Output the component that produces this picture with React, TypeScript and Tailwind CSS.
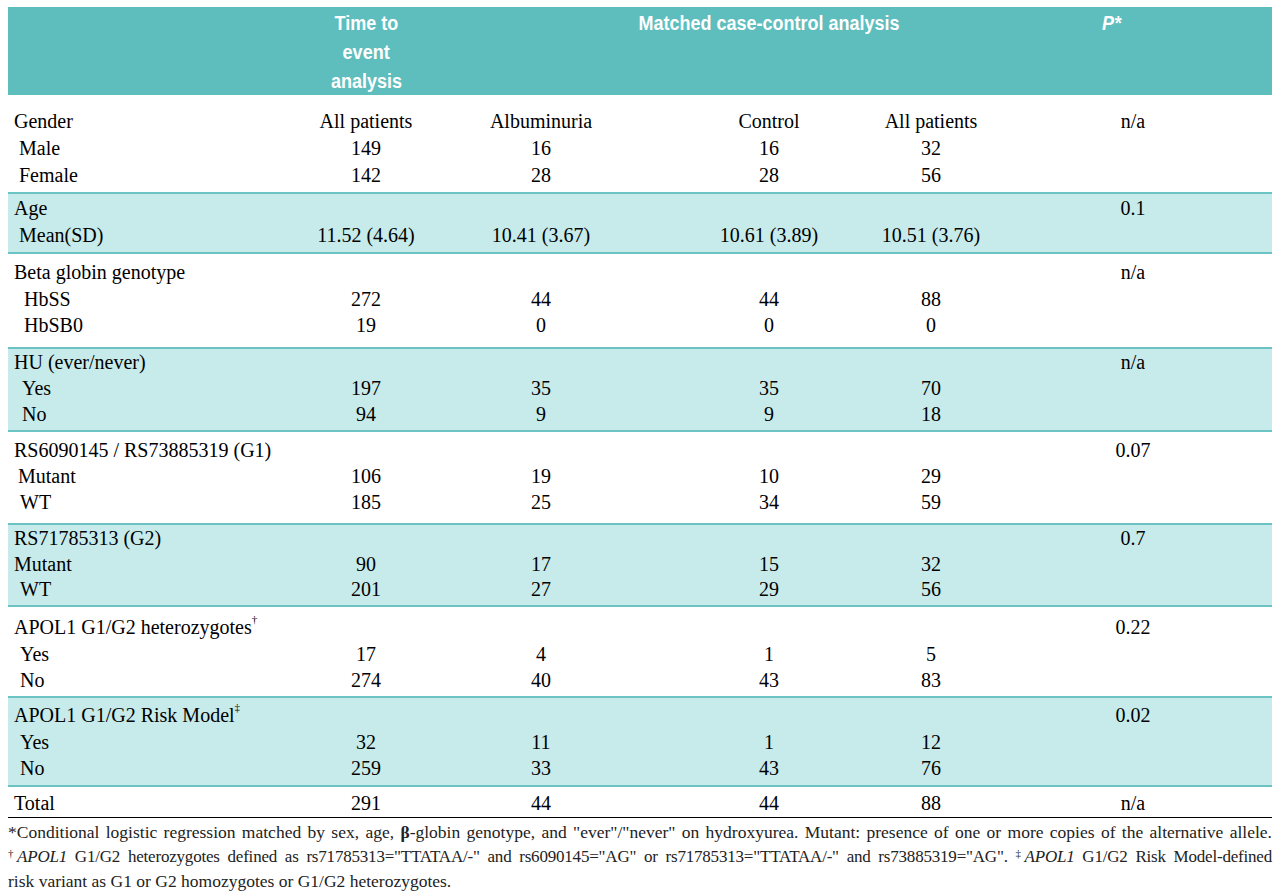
import React from 'react';

type Row = { label: string; indent: string; vals: string[]; p?: string };
type Group = { shaded: boolean; pad: string; lead: string; rows: Row[]; last?: boolean };

const GROUPS: Group[] = [
  {
    shaded: false,
    pad: 'pt-[13px] pb-[3px]',
    lead: 'leading-[27px]',
    rows: [
      { label: 'Gender', indent: 'pl-[6px]', vals: ['All patients', 'Albuminuria', 'Control', 'All patients'], p: 'n/a' },
      { label: 'Male', indent: 'pl-[11px]', vals: ['149', '16', '16', '32'] },
      { label: 'Female', indent: 'pl-[11px]', vals: ['142', '28', '28', '56'] },
    ],
  },
  {
    shaded: true,
    pad: 'pt-[1px] pb-[3px]',
    lead: 'leading-[27px]',
    rows: [
      { label: 'Age', indent: 'pl-[6px]', vals: ['', '', '', ''], p: '0.1' },
      { label: 'Mean(SD)', indent: 'pl-[11px]', vals: ['11.52 (4.64)', '10.41 (3.67)', '10.61 (3.89)', '10.51 (3.76)'] },
    ],
  },
  {
    shaded: false,
    pad: 'pt-[5px] pb-[8.5px]',
    lead: 'leading-[26.5px]',
    rows: [
      { label: 'Beta globin genotype', indent: 'pl-[6px]', vals: ['', '', '', ''], p: 'n/a' },
      { label: 'HbSS', indent: 'pl-[16px]', vals: ['272', '44', '44', '88'] },
      { label: 'HbSB0', indent: 'pl-[16px]', vals: ['19', '0', '0', '0'] },
    ],
  },
  {
    shaded: true,
    pad: 'pt-0 pb-[3px]',
    lead: 'leading-[26px]',
    rows: [
      { label: 'HU (ever/never)', indent: 'pl-[6px]', vals: ['', '', '', ''], p: 'n/a' },
      { label: 'Yes', indent: 'pl-[14px]', vals: ['197', '35', '35', '70'] },
      { label: 'No', indent: 'pl-[14px]', vals: ['94', '9', '9', '18'] },
    ],
  },
  {
    shaded: false,
    pad: 'pt-[5px] pb-[8px]',
    lead: 'leading-[26px]',
    rows: [
      { label: 'RS6090145 / RS73885319 (G1)', indent: 'pl-[6px]', vals: ['', '', '', ''], p: '0.07' },
      { label: 'Mutant', indent: 'pl-[10px]', vals: ['106', '19', '10', '29'] },
      { label: 'WT', indent: 'pl-[12px]', vals: ['185', '25', '34', '59'] },
    ],
  },
  {
    shaded: true,
    pad: 'pt-[1px] pb-[2.5px]',
    lead: 'leading-[25.5px]',
    rows: [
      { label: 'RS71785313 (G2)', indent: 'pl-[6px]', vals: ['', '', '', ''], p: '0.7' },
      { label: 'Mutant', indent: 'pl-[6px]', vals: ['90', '17', '15', '32'] },
      { label: 'WT', indent: 'pl-[12px]', vals: ['201', '27', '29', '56'] },
    ],
  },
  {
    shaded: false,
    pad: 'pt-[7px] pb-[2.5px]',
    lead: 'leading-[26.5px]',
    rows: [
      { label: 'APOL1 G1/G2 heterozygotes†', indent: 'pl-[6px]', vals: ['', '', '', ''], p: '0.22' },
      { label: 'Yes', indent: 'pl-[12px]', vals: ['17', '4', '1', '5'] },
      { label: 'No', indent: 'pl-[12px]', vals: ['274', '40', '43', '83'] },
    ],
  },
  {
    shaded: true,
    pad: 'pt-[4px] pb-[3.5px]',
    lead: 'leading-[26.5px]',
    rows: [
      { label: 'APOL1 G1/G2 Risk Model‡', indent: 'pl-[6px]', vals: ['', '', '', ''], p: '0.02' },
      { label: 'Yes', indent: 'pl-[12px]', vals: ['32', '11', '1', '12'] },
      { label: 'No', indent: 'pl-[12px]', vals: ['259', '33', '43', '76'] },
    ],
  },
  {
    shaded: false,
    pad: 'pt-[3px] pb-[1px]',
    lead: 'leading-[26px]',
    last: true,
    rows: [{ label: 'Total', indent: 'pl-[6px]', vals: ['291', '44', '44', '88'], p: 'n/a' }],
  },
];

const GRID = 'grid grid-cols-[282px_152px_198px_258px_66px_308px]';

function Label({ text, indent }: { text: string; indent: string }) {
  const sym = text.endsWith('†') || text.endsWith('‡') ? text.slice(-1) : '';
  const body = sym ? text.slice(0, -1) : text;
  return (
    <div className={`${indent} whitespace-nowrap`}>
      {body}
      {sym && <sup className="text-[11px] align-[6px]">{sym}</sup>}
    </div>
  );
}

function Cell({ v, extra = '' }: { v?: string; extra?: string }) {
  return <div className={`flex justify-center whitespace-nowrap ${extra}`}>{v}</div>;
}

function Head({ children }: { children: React.ReactNode }) {
  return <span className="inline-block scale-x-[0.9] whitespace-nowrap">{children}</span>;
}

export default function App() {
  return (
    <div className="w-[1280px] h-[892px] bg-white pt-[7px] px-[8px] overflow-hidden text-black font-['Liberation_Serif',serif]">
      {/* Header band */}
      <div
        className={`${GRID} h-[88px] bg-[#5ebdbd] text-white font-bold text-[20px] leading-[29px] font-['Liberation_Sans',sans-serif]`}
      >
        <div />
        <div className="flex flex-col items-center pt-[2px]">
          <Head>Time to</Head>
          <Head>event</Head>
          <Head>analysis</Head>
        </div>
        <div />
        <div className="flex justify-center pt-[2px]">
          <Head>Matched case-control analysis</Head>
        </div>
        <div />
        <div className="flex justify-center pt-[2px] pr-[12px] italic">
          <Head>P*</Head>
        </div>
      </div>

      {/* Body groups */}
      {GROUPS.map((g, gi) => (
        <div
          key={gi}
          className={`${g.pad} ${g.lead} ${g.shaded ? 'bg-[#c7ebeb]' : 'bg-white'} ${
            g.last ? 'border-b border-b-black' : 'border-b-2 border-[#6cc3c3]'
          } text-[20px]`}
        >
          {g.rows.map((r, ri) => (
            <div key={ri} className={GRID}>
              <Label text={r.label} indent={r.indent} />
              <Cell v={r.vals[0]} />
              <Cell v={r.vals[1]} />
              <Cell v={r.vals[2]} />
              <Cell v={r.vals[3]} />
              <Cell v={r.p} extra="pl-[30px]" />
            </div>
          ))}
        </div>
      ))}

      {/* Footnotes */}
      <div className="pt-[2px] text-[17.5px] leading-[24.5px] text-[#222]">
        <p className="h-[24.5px] text-justify [text-align-last:justify] whitespace-nowrap">
          *Conditional logistic regression matched by sex, age, <b>β</b>-globin genotype, and "ever"/"never" on hydroxyurea. Mutant: presence of one or more copies of the alternative allele.
        </p>
        <p className="h-[24.5px] text-[17px] tracking-[-0.2px] text-justify [text-align-last:justify] whitespace-nowrap">
          <span className="text-[11px] relative -top-[5px]">†</span><i>APOL1</i> G1/G2 heterozygotes defined as rs71785313="TTATAA/-" and rs6090145="AG" or rs71785313="TTATAA/-" and rs73885319="AG". <span className="text-[11px] relative -top-[5px]">‡</span><i>APOL1</i> G1/G2 Risk Model-defined
        </p>
        <p className="h-[24.5px]">risk variant as G1 or G2 homozygotes or G1/G2 heterozygotes.</p>
      </div>
    </div>
  );
}
